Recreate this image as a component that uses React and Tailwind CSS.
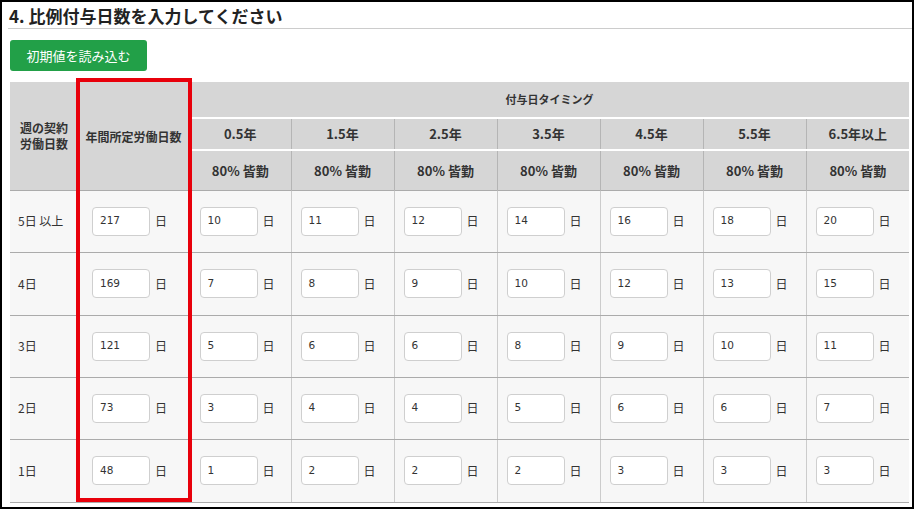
import React from 'react';

const years = ['0.5年', '1.5年', '2.5年', '3.5年', '4.5年', '5.5年', '6.5年以上'];

const rows = [
  { label: '5日 以上', annual: 217, days: [10, 11, 12, 14, 16, 18, 20] },
  { label: '4日', annual: 169, days: [7, 8, 9, 10, 12, 13, 15] },
  { label: '3日', annual: 121, days: [5, 6, 6, 8, 9, 10, 11] },
  { label: '2日', annual: 73, days: [3, 4, 4, 5, 6, 6, 7] },
  { label: '1日', annual: 48, days: [1, 2, 2, 2, 3, 3, 3] },
];

const font = { fontFamily: '"Noto Sans CJK JP", "Liberation Sans", sans-serif' };

function DayInput({ value }) {
  return (
    <div className="flex items-center gap-[5px]">
      <div
        className="w-[58px] h-[29px] bg-white border border-[#cfcfcf] rounded-[4px] flex items-center pl-[7px] text-[10.5px] text-[#333]"
        style={{ fontFamily: '"DejaVu Sans", sans-serif' }}
      >
        {value}
      </div>
      <span className="text-[12px] text-[#333]">日</span>
    </div>
  );
}

export default function App() {
  return (
    <div className="relative w-[914px] h-[509px] border-2 border-black bg-white overflow-hidden text-[#333]" style={font}>
      <div className="ml-[6px] h-[27px] border-b border-[#cccccc] flex items-center pl-[1px]">
        <h2 className="text-[17px] font-bold leading-none text-[#222]">4. 比例付与日数を入力してください</h2>
      </div>

      <button className="ml-[8px] mt-[11px] w-[137px] h-[31px] rounded-[3px] bg-[#22a048] text-white text-[13px] flex items-center justify-center">
        初期値を読み込む
      </button>

      <table className="ml-[8px] mt-[11px] w-[899px] table-fixed border-collapse">
        <colgroup>
          <col className="w-[67px]" />
          <col className="w-[113px]" />
          <col className="w-[101px]" />
          <col className="w-[103px]" />
          <col className="w-[103px]" />
          <col className="w-[103px]" />
          <col className="w-[103px]" />
          <col className="w-[103px]" />
          <col className="w-[103px]" />
        </colgroup>
        <thead>
          <tr className="h-[36px]">
            <th rowSpan={3} className="bg-[#d6d6d6] text-left pl-[10px] text-[12px] font-bold leading-[16px] align-middle">
              週の契約<br />労働日数
            </th>
            <th rowSpan={3} className="bg-[#d6d6d6] text-[12px] font-bold align-middle pt-[2px]">年間所定労働日数</th>
            <th colSpan={7} className="bg-[#d6d6d6] text-[11px] font-bold border-b-2 border-white">付与日タイミング</th>
          </tr>
          <tr className="h-[32px]">
            {years.map((y, i) => (
              <th key={y} className={`bg-[#d6d6d6] text-[13px] font-bold border-b-2 border-white ${i > 0 ? 'border-l border-l-[#b5b5b5]' : ''}`}>
                {y}
              </th>
            ))}
          </tr>
          <tr className="h-[40px]">
            {years.map((y, i) => (
              <th key={y} className={`bg-[#d6d6d6] text-[13px] font-bold ${i > 0 ? 'border-l border-l-[#b5b5b5]' : ''}`}>
                80% 皆勤
              </th>
            ))}
          </tr>
        </thead>
        <tbody>
          {rows.map((r, ri) => (
            <tr key={r.label} className={ri === 1 || ri === 4 ? 'h-[63px]' : 'h-[62px]'}>
              <td className="bg-[#f7f7f7] border-t border-b border-[#ababab] pl-[8px] text-[12px]">{r.label}</td>
              <td className="bg-[#f7f7f7] border-t border-b border-[#ababab] pl-[15px]">
                <DayInput value={r.annual} />
              </td>
              {r.days.map((d, i) => (
                <td key={i} className="bg-[#f7f7f7] border-t border-b border-[#ababab] border-l border-l-[#cccccc] pl-[9px]">
                  <DayInput value={d} />
                </td>
              ))}
            </tr>
          ))}
        </tbody>
      </table>

      <div className="absolute left-[74px] top-[76px] w-[116px] h-[424px] border-4 border-[#e8000b] pointer-events-none" />
    </div>
  );
}
